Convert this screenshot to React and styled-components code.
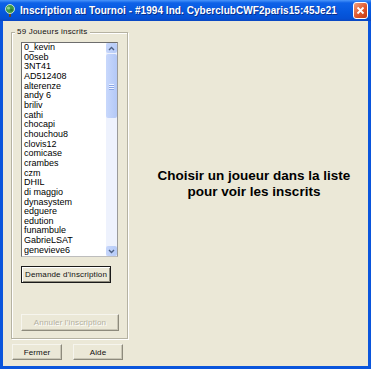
import React from "react";
import styled, { createGlobalStyle } from "styled-components";

const GlobalStyle = createGlobalStyle`
  html, body {
    margin: 0;
    padding: 0;
    overflow: hidden;
    background: #ece9d8;
  }
`;

const players = [
  "0_kevin", "00seb", "3NT41", "AD512408", "alterenze", "andy 6", "briliv",
  "cathi", "chocapi", "chouchou8", "clovis12", "comicase", "crambes", "czm",
  "DHIL", "di maggio", "dynasystem", "edguere", "edution", "funambule",
  "GabrieLSAT", "genevieve6",
];

const Window = styled.div`
  width: 371px;
  height: 369px;
  box-sizing: border-box;
  display: flex;
  flex-direction: column;
  background: #0a55dc;
  font-family: "Liberation Sans", Arial, sans-serif;
`;

const TitleBar = styled.div`
  height: 21px;
  flex: none;
  display: flex;
  align-items: center;
  padding: 0 3px 0 4px;
  background: linear-gradient(#4a95fa 0%, #0e62e8 14%, #0557dd 60%, #0550d4 88%, #0a46c0 100%);
`;

const TitleText = styled.span`
  flex: 1;
  margin-left: 4px;
  color: #fff;
  font-weight: bold;
  font-size: 10px;
  letter-spacing: 0.05px;
  white-space: nowrap;
  text-shadow: 1px 1px 0 #0a2f8c;
`;

const CloseButton = styled.div`
  width: 15px;
  height: 17px;
  box-sizing: border-box;
  border: 1px solid #fff;
  border-radius: 3px;
  background: linear-gradient(135deg, #f0a080 0%, #e0572c 55%, #c53a12 100%);
  display: flex;
  align-items: center;
  justify-content: center;
`;

const Body = styled.div`
  flex: 1;
  margin: 0 3px 3px 3px;
  background: #ebe8d7;
  display: flex;
  padding: 11px 0 0 8px;
  box-sizing: border-box;
`;

const LeftColumn = styled.div`
  display: flex;
  flex-direction: column;
  width: 117px;
`;

const GroupBox = styled.div`
  position: relative;
  width: 117px;
  height: 307px;
  box-sizing: border-box;
  border: 1px solid #b5b2a2;
  box-shadow: inset 1px 1px 0 #fff, 1px 1px 0 #fff;
  padding: 9px 0 0 9px;
  display: flex;
  flex-direction: column;
  align-items: flex-start;
`;

const GroupLabel = styled.span`
  position: absolute;
  top: -6px;
  left: 3px;
  padding: 0 2px;
  background: #ebe8d7;
  font-size: 8px;
  letter-spacing: 0.2px;
  color: #111;
  line-height: 10px;
`;

const ListBox = styled.div`
  width: 97px;
  height: 215px;
  box-sizing: border-box;
  border: 1px solid #6d6d6d;
  border-right-color: #9a9a9a;
  border-bottom-color: #bdbdbd;
  background: #fff;
  display: flex;
`;

const Items = styled.div`
  flex: 1;
  overflow: hidden;
  padding-left: 2px;
`;

const Item = styled.div`
  font-size: 9px;
  line-height: 9.67px;
  height: 9.67px;
  color: #000;
  white-space: nowrap;
`;

const ScrollBar = styled.div`
  width: 11px;
  display: flex;
  flex-direction: column;
  background: #eef2fd;
`;

const ScrollButton = styled.div`
  height: 10px;
  flex: none;
  background: linear-gradient(90deg, #c6d6fb, #b6cbf8);
  border-radius: 2px;
  display: flex;
  align-items: center;
  justify-content: center;
`;

const Thumb = styled.div`
  height: 64px;
  margin-top: 1px;
  background: linear-gradient(90deg, #c8d8fc, #b3c8f7);
  border-radius: 2px;
  display: flex;
  flex-direction: column;
  align-items: center;
  justify-content: center;
  gap: 1px;
`;

const Grip = styled.div`
  width: 5px;
  height: 1px;
  background: #eef3ff;
  box-shadow: 0 1px 0 #8aa6e6;
`;

const Track = styled.div`
  flex: 1;
`;

const Button = styled.div`
  width: ${(p) => p.$w}px;
  height: ${(p) => p.$h || 16}px;
  box-sizing: border-box;
  margin-top: ${(p) => p.$mt || 0}px;
  background: #ebe8d7;
  border: 1px solid ${(p) => (p.$default ? "#1a1a1a" : "#f6f5ee")};
  border-right-color: ${(p) => (p.$default ? "#1a1a1a" : "#8d8a7c")};
  border-bottom-color: ${(p) => (p.$default ? "#1a1a1a" : "#8d8a7c")};
  box-shadow: ${(p) =>
    p.$default
      ? "inset 1px 1px 0 #fff, inset -1px -1px 0 #8d8a7c"
      : "inset -1px -1px 0 #c9c6b6"};
  display: flex;
  align-items: center;
  justify-content: center;
  font-size: 8px;
  letter-spacing: 0.15px;
  color: ${(p) => (p.$disabled ? "#b2af9f" : "#111")};
  text-shadow: ${(p) => (p.$disabled ? "1px 1px 0 #fff" : "none")};
  white-space: nowrap;
`;

const ButtonRow = styled.div`
  display: flex;
  gap: 11px;
  margin: 5px 0 0 1px;
`;

const MessagePanel = styled.div`
  flex: 1;
  height: 307px;
  display: flex;
  align-items: center;
  justify-content: center;
  padding: 0 0 4px 12px;
  box-sizing: border-box;
`;

const Message = styled.div`
  font-weight: bold;
  font-size: 13.5px;
  line-height: 16px;
  text-align: center;
  color: #000;
`;

const Arrow = ({ down }) => (
  <svg width="7" height="5" viewBox="0 0 7 5">
    <path
      d={down ? "M1 1 L3.5 3.5 L6 1" : "M1 4 L3.5 1.5 L6 4"}
      fill="none"
      stroke="#4d6185"
      strokeWidth="1.4"
    />
  </svg>
);

const AppIcon = () => (
  <svg width="12" height="13" viewBox="0 0 12 13">
    <rect x="5" y="8" width="2" height="5" fill="#6b4a1e" />
    <circle cx="6" cy="5" r="4.5" fill="#3d9a4a" stroke="#e8f5e8" strokeWidth="0.8" />
    <circle cx="4.5" cy="4" r="1.6" fill="#8fd18c" />
    <circle cx="7.5" cy="6" r="1.3" fill="#2a7a36" />
  </svg>
);

export default function App() {
  return (
    <>
      <GlobalStyle />
      <Window>
        <TitleBar>
          <AppIcon />
          <TitleText>Inscription au Tournoi - #1994 Ind. CyberclubCWF2paris15:45Je21</TitleText>
          <CloseButton>
            <svg width="9" height="9" viewBox="0 0 9 9">
              <path d="M1.5 1.5 L7.5 7.5 M7.5 1.5 L1.5 7.5" stroke="#fff" strokeWidth="1.8" />
            </svg>
          </CloseButton>
        </TitleBar>
        <Body>
          <LeftColumn>
            <GroupBox>
              <GroupLabel>59 Joueurs inscrits</GroupLabel>
              <ListBox>
                <Items>
                  {players.map((p) => (
                    <Item key={p}>{p}</Item>
                  ))}
                </Items>
                <ScrollBar>
                  <ScrollButton>
                    <Arrow />
                  </ScrollButton>
                  <Thumb>
                    <Grip />
                    <Grip />
                    <Grip />
                  </Thumb>
                  <Track />
                  <ScrollButton>
                    <Arrow down />
                  </ScrollButton>
                </ScrollBar>
              </ListBox>
              <Button $w={90} $h={17} $mt={9} $default>
                Demande d'inscription
              </Button>
              <Button $w={98} $h={17} $mt={31} $disabled>
                Annuler l'inscription
              </Button>
            </GroupBox>
            <ButtonRow>
              <Button $w={50} $h={16}>Fermer</Button>
              <Button $w={50} $h={16}>Aide</Button>
            </ButtonRow>
          </LeftColumn>
          <MessagePanel>
            <Message>
              Choisir un joueur dans la liste
              <br />
              pour voir les inscrits
            </Message>
          </MessagePanel>
        </Body>
      </Window>
    </>
  );
}
